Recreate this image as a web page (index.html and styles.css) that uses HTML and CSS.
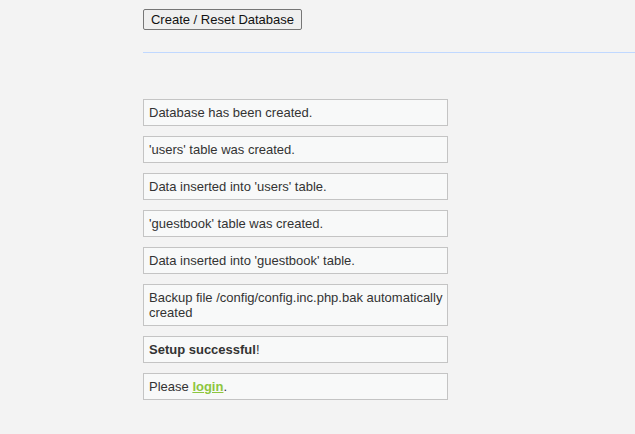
FILE: index.html
```html
<!DOCTYPE html>
<html>
<head>
<meta charset="utf-8">
<link rel="stylesheet" href="styles.css">
</head>
<body>
<div class="main">
  <form class="setup-form">
    <button type="button" class="reset-btn">Create / Reset Database</button>
  </form>
  <div class="rule"></div>
  <div class="messages">
    <div class="message">Database has been created.</div>
    <div class="message">'users' table was created.</div>
    <div class="message">Data inserted into 'users' table.</div>
    <div class="message">'guestbook' table was created.</div>
    <div class="message">Data inserted into 'guestbook' table.</div>
    <div class="message">Backup file /config/config.inc.php.bak automatically created</div>
    <div class="message"><strong>Setup successful</strong>!</div>
    <div class="message">Please <a class="login" href="#">login</a>.</div>
  </div>
</div>
</body>
</html>
```
FILE: styles.css
```css
html, body {
  margin: 0;
  padding: 0;
  background: #f3f3f3;
  font-family: "Liberation Sans", Arial, sans-serif;
  font-size: 13px;
  color: #333;
}
.main {
  padding: 9px 0 0 143px;
}
.setup-form {
  margin: 0;
}
.reset-btn {
  font-family: "Liberation Sans", Arial, sans-serif;
  font-size: 13px;
  color: #111;
  background: #efefef;
  border: 1px solid #767676;
  border-radius: 2px;
  height: 21px;
  padding: 0 6px;
  width: 159px;
}
.rule {
  margin-top: 22px;
  height: 1px;
  background: #c0d8ff;
}
.messages {
  margin-top: 46px;
  width: 305px;
}
.message {
  box-sizing: border-box;
  border: 1px solid #c4c4c4;
  background: #f8f9f9;
  padding: 5px 1px 5px 5px;
  line-height: 15px;
  margin-bottom: 10px;
}
.login {
  color: #8dc63f;
  font-weight: bold;
}
```
